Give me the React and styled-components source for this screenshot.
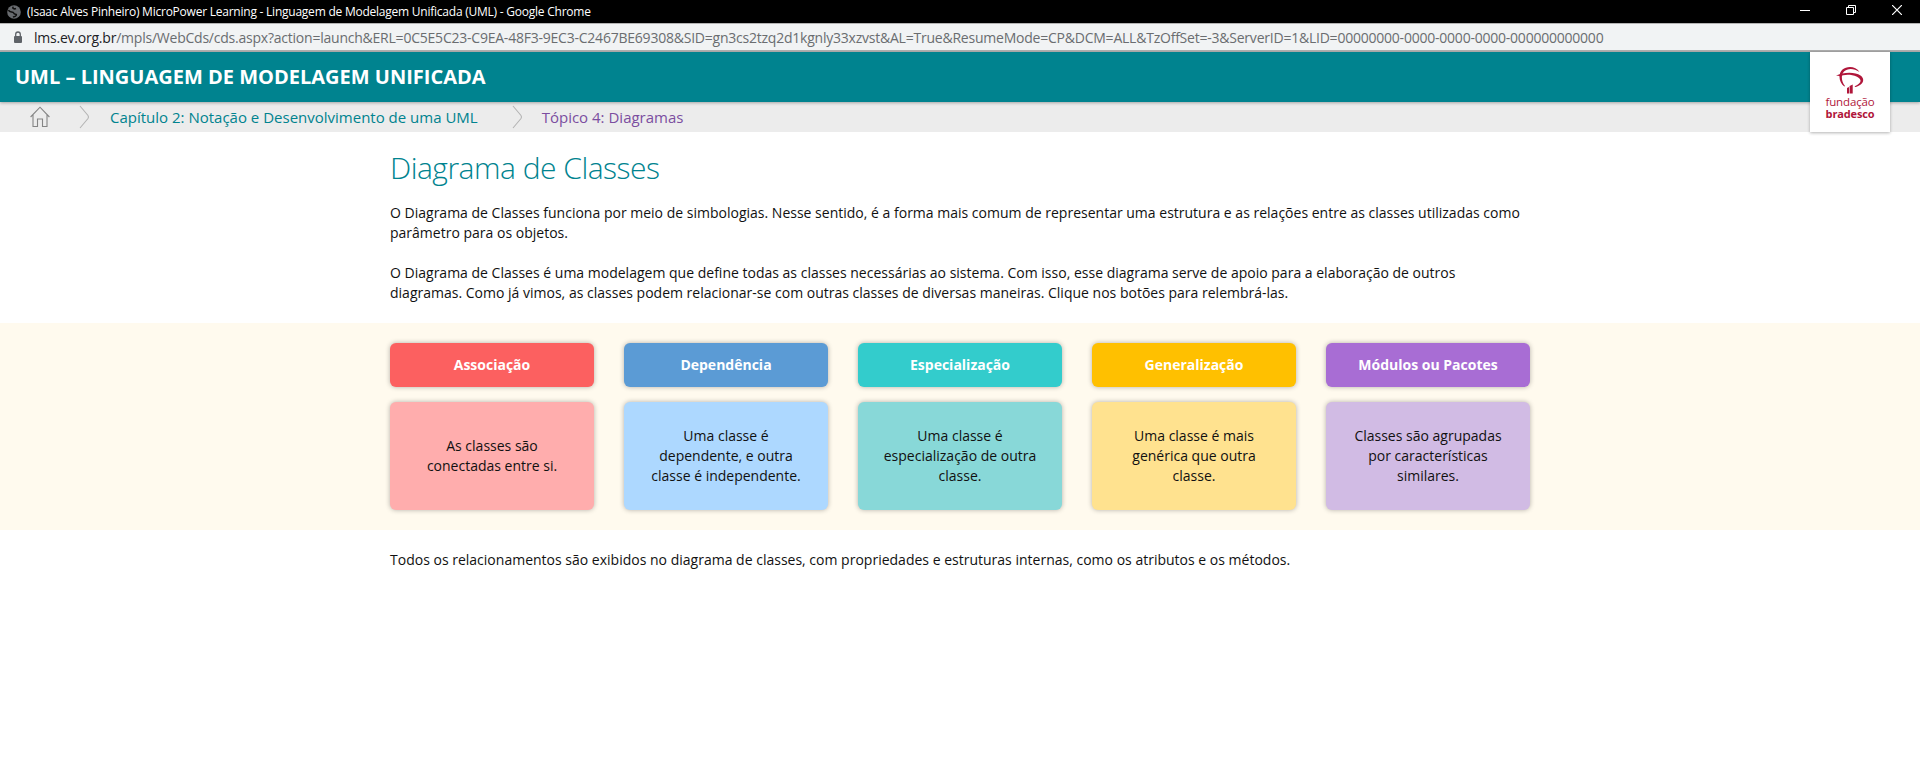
import React from "react";
import styled, { createGlobalStyle } from "styled-components";

const Global = createGlobalStyle`
  * { box-sizing: border-box; }
  body { margin: 0; background: #fff; color: #111; font-family: "Open Sans", "Noto Sans", sans-serif; font-size: 14px; line-height: 20px; overflow: hidden; }
  h1, h2, p { margin: 0; }
`;
const Page = styled.div`min-height: 783px; background: #fff;`;
const TitleBar = styled.div`
  display: flex; align-items: center; height: 23px; padding: 0 18px 0 7px; background: #000; color: #fff;
  font-size: 12px; line-height: 23px;
`;
const WindowTitle = styled.span`flex: 1; margin-left: 6px; white-space: nowrap; letter-spacing: -0.235px;`;
const WindowButtons = styled.div`display: flex; align-items: center; gap: 36px; padding-bottom: 3px;`;
const AddressBar = styled.div`
  display: flex; align-items: center; height: 29px; padding-left: 13px; gap: 11px;
  background: #f1f3f4; border-top: 1px solid #b3b3b3; border-bottom: 2px solid #b0b0b0;
  font-size: 14px; color: #6a6d70; white-space: nowrap;
`;
const Url = styled.span`letter-spacing: -0.226px; padding-top: 1px;`;
const Host = styled.span`color: #202124;`;
const CourseHeader = styled.header`
  position: relative; z-index: 1; display: flex; justify-content: space-between; height: 50px; padding: 0 30px 0 15px;
  background: #00838f; box-shadow: 0 1px 3px rgba(0,0,0,.3);
`;
const CourseTitle = styled.h1`font-size: 20px; line-height: 50px; font-weight: 700; color: #fff; white-space: nowrap;`;
const LogoCard = styled.div`
  display: flex; flex-direction: column; align-items: center; width: 80px; height: 80px; padding-top: 14px;
  background: #fff; box-shadow: 0 1px 3px rgba(0,0,0,.3); color: #b0163a;
`;
const LogoWords = styled.div`display: flex; flex-direction: column; align-items: center; margin-top: 2px;`;
const LogoWord = styled.span`
  font-size: ${p => p.$bold ? 11 : 11.5}px; line-height: 12px; height: 12px;
  letter-spacing: ${p => p.$bold ? -0.15 : -0.15}px; font-weight: ${p => p.$bold ? 700 : 400};
`;
const Breadcrumb = styled.nav`display: flex; align-items: center; height: 30px; padding-left: 30px; background: #ececec; font-size: 15px;`;
const Crumb = styled.span`white-space: nowrap; color: ${p => p.$current ? "#7b4ea0" : "#00838f"}; padding: 0 ${p => p.$current ? 0 : 33}px 0 ${p => p.$current ? 19 : 20}px;`;
const HomeLink = styled.span`display: flex; margin-right: 28px;`;
const Separator = styled.svg`flex: none;`;
const Content = styled.div`width: 1140px; margin: 0 auto;`;
const Heading = styled.h2`padding-top: 16px; font-size: 30px; line-height: 40px; font-weight: 300; letter-spacing: -0.5px; color: #00838f;`;
const Paragraph = styled.p`margin-top: ${p => p.$gap}px; white-space: nowrap; letter-spacing: 0.005px;`;
const Band = styled.section`margin-top: 20px; height: 207px; padding-top: 20px; background: #fffaee;`;
const Grid = styled.div`display: grid; grid-template-columns: repeat(5, 204px); gap: 30px;`;
const Column = styled.div`display: grid; gap: 15px;`;
const Tile = styled.div`
  display: flex; align-items: center; justify-content: center; text-align: center; border-radius: 6px;
  box-shadow: 0 0 5px rgba(0,0,0,.3);
`;
const RelationButton = styled(Tile)`height: 44px; background: ${p => p.$color}; color: #fff; font-weight: 700;`;
const RelationCard = styled(Tile)`height: 108px; background: ${p => p.$color}; white-space: pre-line;`;

const relations = [
  ["Associação", "As classes são\nconectadas entre si.", "#fc6060", "#ffadad"],
  ["Dependência", "Uma classe é\ndependente, e outra\nclasse é independente.", "#5b9bd5", "#add8ff"],
  ["Especialização", "Uma classe é\nespecialização de outra\nclasse.", "#33cccc", "#88d8d8"],
  ["Generalização", "Uma classe é mais\ngenérica que outra\nclasse.", "#ffc000", "#ffe28f"],
  ["Módulos ou Pacotes", "Classes são agrupadas\npor características\nsimilares.", "#a86dd4", "#d1bbe4"],
];

const Globe = () => (
  <svg width="14" height="14" viewBox="0 0 14 14">
    <circle cx="7" cy="7" r="6.8" fill="#686b6f" />
    <path d="M1.500 5 C2.500 8 6 6 6.700 8 S10 8.500 9.300 10.200 S7 11.500 6 12 M6.500 1.800 C4.500 3 7 4.500 9 3.500" fill="none" stroke="#101010" strokeWidth="1.500" />
  </svg>
);
const Lock = () => (
  <svg width="10" height="13" viewBox="0 0 10 13">
    <rect x="1" y="5" width="8" height="7" rx="1" fill="#5f6368" />
    <path d="M2.700 5.500 V3.300 a2.300 2.300 0 0 1 4.600 0 V5.500" fill="none" stroke="#5f6368" strokeWidth="1.300" />
  </svg>
);
const Home = () => (
  <svg width="20" height="22" viewBox="0 0 20 22" fill="none" stroke="#858585" strokeWidth="1.100">
    <path d="M0.600 11 L10 1.200 L19.400 11 M3 9 V20.500 H7.500 V13 H12.500 V20.500 H17 V9" />
  </svg>
);
const Arrow = () => (
  <Separator width="12" height="24" viewBox="0 0 12 24" fill="none" stroke="#b4b4b4" strokeWidth="1.100">
    <path d="M2 1 L10 10.500 Q11 12 10 13.500 L2 23" />
  </Separator>
);
const Tree = () => (
  <svg width="30" height="28" viewBox="0 0 30 28" fill="#b0163a">
    <path d="M24.500 6 C21 0 12 -0.500 7.500 3.500 C3 7.500 3.500 16 9.300 20.600 L10 20 C6 15 6 8.500 9 5.500 C12.500 2 19 2 24.500 6Z" />
    <path d="M1 9.600 C8 6 20 5.500 25.500 9.500 C31.500 14 26.500 20 20 21 L19.700 20.200 C26.500 17 27.500 13.500 22 10.700 C15 7.500 8 8.700 5 10.300 Q3 9.800 1 9.600Z" />
    <path d="M12 22 L14 21 V27.500 H12Z M14.600 20 L17.700 18.500 V27.500 H14.600Z" />
  </svg>
);

export default function App() {
  return (
    <Page>
      <Global />
      <TitleBar>
        <Globe />
        <WindowTitle>(Isaac Alves Pinheiro) MicroPower Learning - Linguagem de Modelagem Unificada (UML) - Google Chrome</WindowTitle>
        <WindowButtons>
          <svg width="10" height="10"><path d="M0 5.500H10" stroke="#fff" /></svg>
          <svg width="10" height="10" fill="none" stroke="#fff"><path d="M.5 2.500H7.500V9.500H.5Z M2.500 2V.5H9.500V7.500H8" /></svg>
          <svg width="10" height="10" stroke="#fff" strokeWidth="1.200"><path d="M0 0L10 10M10 0L0 10" /></svg>
        </WindowButtons>
      </TitleBar>
      <AddressBar>
        <Lock />
        <Url><Host>lms.ev.org.br</Host>/mpls/WebCds/cds.aspx?action=launch&amp;ERL=0C5E5C23-C9EA-48F3-9EC3-C2467BE69308&amp;SID=gn3cs2tzq2d1kgnly33xzvst&amp;AL=True&amp;ResumeMode=CP&amp;DCM=ALL&amp;TzOffSet=-3&amp;ServerID=1&amp;LID=00000000-0000-0000-0000-000000000000</Url>
      </AddressBar>
      <CourseHeader>
        <CourseTitle>UML – LINGUAGEM DE MODELAGEM UNIFICADA</CourseTitle>
        <LogoCard>
          <Tree />
          <LogoWords>
            <LogoWord>fundação</LogoWord>
            <LogoWord $bold>bradesco</LogoWord>
          </LogoWords>
        </LogoCard>
      </CourseHeader>
      <Breadcrumb>
        <HomeLink><Home /></HomeLink>
        <Arrow />
        <Crumb>Capítulo 2: Notação e Desenvolvimento de uma UML</Crumb>
        <Arrow />
        <Crumb $current>Tópico 4: Diagramas</Crumb>
      </Breadcrumb>
      <Content>
        <Heading>Diagrama de Classes</Heading>
        <Paragraph $gap={15}>
          O Diagrama de Classes funciona por meio de simbologias. Nesse sentido, é a forma mais comum de representar uma estrutura e as relações entre as classes utilizadas como<br />
          parâmetro para os objetos.
        </Paragraph>
        <Paragraph $gap={20}>
          O Diagrama de Classes é uma modelagem que define todas as classes necessárias ao sistema. Com isso, esse diagrama serve de apoio para a elaboração de outros<br />
          diagramas. Como já vimos, as classes podem relacionar-se com outras classes de diversas maneiras. Clique nos botões para relembrá-las.
        </Paragraph>
      </Content>
      <Band>
        <Content>
          <Grid>
            {relations.map(([name, text, strong, soft]) => (
              <Column key={name}>
                <RelationButton $color={strong}>{name}</RelationButton>
                <RelationCard $color={soft}>{text}</RelationCard>
              </Column>
            ))}
          </Grid>
        </Content>
      </Band>
      <Content>
        <Paragraph $gap={20}>Todos os relacionamentos são exibidos no diagrama de classes, com propriedades e estruturas internas, como os atributos e os métodos.</Paragraph>
      </Content>
    </Page>
  );
}
